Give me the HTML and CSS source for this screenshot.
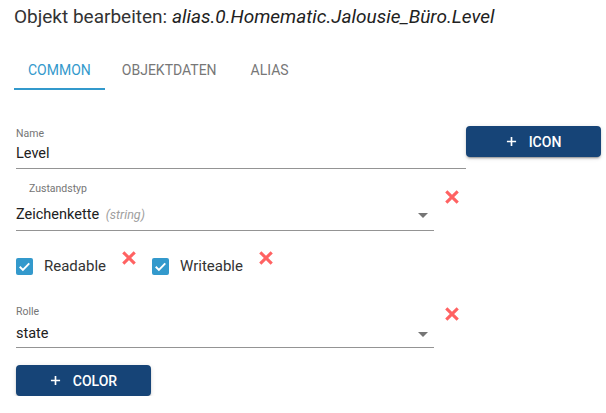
FILE: index.html
```html
<!DOCTYPE html>
<html lang="de">

<head>
    <meta charset="UTF-8">
    <meta name="viewport" content="width=device-width, initial-scale=1.0">
    <title>Objekt bearbeiten</title>
    <link rel="stylesheet" href="styles.css">
</head>

<body>
    <div class="dialog">
        <h1 class="title">Objekt bearbeiten: <i>alias.0.Homematic.Jalousie_Büro.Level</i></h1>

        <div class="tabs">
            <div class="tab active">Common</div>
            <div class="tab">Objektdaten</div>
            <div class="tab">Alias</div>
        </div>

        <div class="form">
            <div class="row row-name">
                <div class="field field-wide">
                    <label class="field-label">Name</label>
                    <div class="field-input">Level</div>
                </div>
                <button class="btn">
                    <svg class="plus" viewBox="0 0 12 12"><path d="M6 1v10M1 6h10" /></svg>
                    Icon
                </button>
            </div>

            <div class="row row-type">
                <div class="field field-select">
                    <label class="field-label indent">Zustandstyp</label>
                    <div class="field-input select">
                        <span>Zeichenkette <span class="hint">(string)</span></span>
                        <span class="arrow"></span>
                    </div>
                </div>
                <svg class="remove" viewBox="0 0 14 14"><path d="M2 2l10 10M12 2L2 12" /></svg>
            </div>

            <div class="row row-checks">
                <label class="check">
                    <span class="box"><svg viewBox="0 0 16 16"><path d="M3.5 8.2l3 3 6-6.2" /></svg></span>
                    Readable
                </label>
                <svg class="remove" viewBox="0 0 14 14"><path d="M2 2l10 10M12 2L2 12" /></svg>
                <label class="check">
                    <span class="box"><svg viewBox="0 0 16 16"><path d="M3.5 8.2l3 3 6-6.2" /></svg></span>
                    Writeable
                </label>
                <svg class="remove" viewBox="0 0 14 14"><path d="M2 2l10 10M12 2L2 12" /></svg>
            </div>

            <div class="row row-role">
                <div class="field field-select">
                    <label class="field-label">Rolle</label>
                    <div class="field-input select">
                        <span>state</span>
                        <span class="arrow"></span>
                    </div>
                </div>
                <svg class="remove" viewBox="0 0 14 14"><path d="M2 2l10 10M12 2L2 12" /></svg>
            </div>

            <div class="row row-color">
                <button class="btn">
                    <svg class="plus" viewBox="0 0 12 12"><path d="M6 1v10M1 6h10" /></svg>
                    Color
                </button>
            </div>
        </div>
    </div>
</body>

</html>
```

FILE: styles.css
```css
body {
    font-family: Roboto, Arial, sans-serif;
    margin: 0;
    padding: 0;
    background-color: #fff;
    color: #212121;
}

.dialog {
    padding: 0 0 0 14px;
}

.title {
    margin: 0;
    padding-top: 5px;
    font-size: 19px;
    font-weight: normal;
    line-height: 24px;
    color: #333;
}

.title i {
    color: #222;
}

.tabs {
    display: flex;
    margin-top: 23px;
}

.tab {
    box-sizing: border-box;
    min-width: 72px;
    padding: 0 17px;
    height: 38px;
    line-height: 36px;
    text-align: center;
    text-transform: uppercase;
    font-size: 14px;
    font-weight: 400;
    color: #777;
    border-bottom: 2px solid transparent;
}

.tab.active {
    padding: 0 14px;
    color: #3399cc;
    border-bottom-color: #3399cc;
}

.form {
    display: flex;
    flex-direction: column;
    padding-left: 2px;
}

.row {
    display: flex;
    align-items: flex-start;
}

.row-name {
    margin-top: 36px;
}

.field {
    display: flex;
    flex-direction: column;
    border-bottom: 1px solid #949494;
}

.field-wide {
    width: 450px;
    padding-top: 2px;
}

.field-select {
    width: 418px;
}

.field-label {
    font-size: 10.5px;
    line-height: 12px;
    color: #757575;
}

.field-label.indent {
    padding-left: 13px;
}

.field-input {
    font-size: 14.5px;
    line-height: 20px;
    padding: 4px 0 4px;
}

.select {
    display: flex;
    justify-content: space-between;
    align-items: center;
}

.hint {
    font-size: 12.5px;
    font-style: italic;
    color: #9e9e9e;
    margin-left: 3px;
}

.arrow {
    width: 0;
    height: 0;
    margin-right: 6px;
    border-left: 5px solid transparent;
    border-right: 5px solid transparent;
    border-top: 5px solid #757575;
}

.btn {
    display: flex;
    align-items: center;
    justify-content: center;
    gap: 12px;
    width: 135px;
    height: 31px;
    padding: 0;
    border: none;
    border-radius: 4px;
    background-color: #164477;
    color: #fff;
    font-family: Roboto, Arial, sans-serif;
    font-size: 14px;
    font-weight: 500;
    text-transform: uppercase;
    box-shadow: 0 3px 1px -2px rgba(0, 0, 0, 0.2), 0 2px 2px 0 rgba(0, 0, 0, 0.14), 0 1px 5px 0 rgba(0, 0, 0, 0.12);
}

.plus {
    width: 11px;
    height: 11px;
    stroke: #fff;
    stroke-width: 1.8;
    fill: none;
}

.remove {
    width: 16px;
    height: 16px;
    stroke: #ff6262;
    stroke-width: 2.7;
    fill: none;
    flex-shrink: 0;
}

.row-type {
    margin-top: 14px;
}

.row-type .field-input {
    margin-top: 6px;
    padding-bottom: 5px;
}

.row-type .remove,
.row-role .remove {
    align-self: flex-end;
    margin: 0 0 26px 10px;
}

.row-checks {
    margin-top: 19px;
    height: 26px;
}

.check {
    display: flex;
    align-items: center;
    gap: 11px;
    font-size: 15px;
    color: #333;
    margin-top: 7px;
}

.check + .remove {
    margin-left: 15px;
}

.row-checks .remove + .check {
    margin-left: 15px;
}

.box {
    width: 17px;
    height: 17px;
    border-radius: 2px;
    background-color: #3399cc;
    display: flex;
}

.box svg {
    width: 17px;
    height: 17px;
    stroke: #fff;
    stroke-width: 1.8;
    fill: none;
}

.row-role {
    margin-top: 30px;
}

.row-role .field-input {
    padding: 6px 0 3px;
}

.row-color {
    margin-top: 17px;
}
```
